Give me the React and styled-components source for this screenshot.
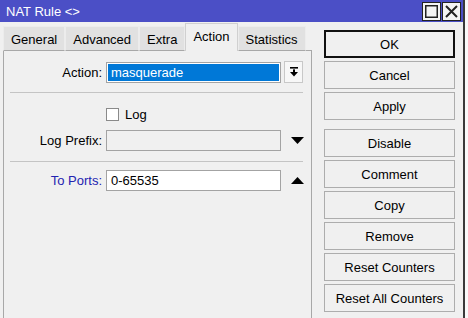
import React from 'react';
import styled, { createGlobalStyle } from 'styled-components';

const GlobalStyle = createGlobalStyle`
  html, body {
    margin: 0;
    padding: 0;
    background: #ffffff;
    font-family: "Liberation Sans", Arial, sans-serif;
    font-size: 13px;
    color: #000;
  }
`;

const Screen = styled.div`
  display: flex;
  width: 468px;
  height: 318px;
`;

const Window = styled.div`
  width: 463px;
  height: 318px;
  background: #f0f0f0;
  border-right: 2px solid #3a3a3a;
  display: flex;
  flex-direction: column;
  overflow: hidden;
`;

const Outside = styled.div`
  flex: 1;
  background: #fafafa;
`;

const TitleBar = styled.div`
  height: 22px;
  flex: none;
  background: #4b4fc6;
  display: flex;
  align-items: center;
  padding: 0 2px 0 6px;
  color: #fff;
`;

const Title = styled.span`
  flex: 1;
  font-size: 13px;
`;

const TitleButton = styled.div`
  width: 17px;
  height: 17px;
  margin-left: 1px;
  background: #f4f4f4;
  border: 1px solid #222;
  display: flex;
  align-items: center;
  justify-content: center;
`;

const Body = styled.div`
  flex: 1;
  display: flex;
  gap: 12px;
`;

const LeftSide = styled.div`
  width: 309px;
  padding-left: 3px;
  padding-top: 1px;
  display: flex;
  flex-direction: column;
`;

const Tabs = styled.div`
  display: flex;
  align-items: flex-end;
  height: 28px;
  position: relative;
  z-index: 1;
  margin-bottom: -1px;
`;

const Tab = styled.div`
  height: ${({ $active }) => ($active ? '28px' : '25px')};
  padding: 0 7px;
  box-sizing: border-box;
  display: flex;
  align-items: ${({ $active }) => ($active ? 'flex-start' : 'center')};
  padding-top: ${({ $active }) => ($active ? '5px' : '1px')};
  background: ${({ $active }) => ($active ? '#f0f0f0' : '#e1e1e1')};
  border: 1px solid ${({ $active }) => ($active ? '#d0d0d0' : '#ececec')};
  border-bottom: ${({ $active }) => ($active ? 'none' : '1px solid #a8a8a8')};
  font-size: 13px;
`;

const Panel = styled.div`
  flex: 1;
  border: 1px solid #a8a8a8;
  border-bottom: none;
  background: #f0f0f0;
  padding-top: 10px;
`;

const Row = styled.div`
  display: grid;
  grid-template-columns: 97px 175px 20px;
  column-gap: 5px;
  align-items: center;
  height: ${({ $h }) => $h || 21}px;
  margin-top: ${({ $mt }) => $mt || 0}px;
  margin-bottom: ${({ $mb }) => $mb || 0}px;
`;

const Label = styled.span`
  text-align: right;
  color: ${({ $blue }) => ($blue ? '#2323b0' : '#000')};
  margin-right: -1px;
`;

const Field = styled.div`
  height: 21px;
  box-sizing: border-box;
  border: 1px solid #a3a3a3;
  background: ${({ $bg }) => $bg};
  color: ${({ $selected }) => ($selected ? '#fff' : '#000')};
  box-shadow: ${({ $selected }) => ($selected ? 'inset 0 0 0 1px #ffffff' : 'none')};
  padding-left: 4px;
  display: flex;
  align-items: center;
`;

const DropButton = styled.div`
  width: 19px;
  height: 22px;
  box-sizing: border-box;
  border: 1px solid #c8c8c8;
  background: #f7f7f7;
  display: flex;
  align-items: center;
  justify-content: center;
  margin-left: -2px;
`;

const Arrow = styled.div`
  display: flex;
  justify-content: center;
  margin-left: 2px;
`;

const Divider = styled.div`
  height: 1px;
  background: #c4c4c4;
  margin-left: 6px;
  width: 293px;
`;

const CheckLine = styled.div`
  display: flex;
  align-items: center;
  gap: 6px;
`;

const Checkbox = styled.div`
  width: 13px;
  height: 13px;
  box-sizing: border-box;
  border: 1px solid #8a8a8a;
  background: #fff;
`;

const Buttons = styled.div`
  display: flex;
  flex-direction: column;
  gap: 3px;
  padding-top: 8px;
  width: 131px;
`;

const Button = styled.div`
  height: 28px;
  box-sizing: border-box;
  border: ${({ $default }) => ($default ? '2px solid #111' : '1px solid #adadad')};
  background: #f0f0f0;
  display: flex;
  align-items: center;
  justify-content: center;
  font-size: 13px;
  margin-top: ${({ $gapTop }) => ($gapTop ? '6px' : '0')};
`;

const DownBar = () => (
  <svg width="10" height="10" viewBox="0 0 10 10">
    <rect x="1" y="0" width="8" height="1.6" fill="#000" />
    <rect x="4" y="2.4" width="2" height="3" fill="#000" />
    <polygon points="1,5 9,5 5,9.5" fill="#000" />
  </svg>
);

const Triangle = ({ up }) => (
  <svg width="13" height="7" viewBox="0 0 13 7">
    <polygon points={up ? '0,7 13,7 6.5,0' : '0,0 13,0 6.5,7'} fill="#000" />
  </svg>
);

export default function App() {
  return (
    <Screen>
      <GlobalStyle />
      <Window>
        <TitleBar>
          <Title>NAT Rule &lt;&gt;</Title>
          <TitleButton>
            <svg width="13" height="13" viewBox="0 0 13 13">
              <rect x="0.75" y="0.75" width="11.5" height="11.5" fill="none" stroke="#222" strokeWidth="1.5" />
            </svg>
          </TitleButton>
          <TitleButton>
            <svg width="13" height="13" viewBox="0 0 13 13">
              <path d="M1 1 L12 12 M12 1 L1 12" stroke="#222" strokeWidth="2" />
            </svg>
          </TitleButton>
        </TitleBar>
        <Body>
          <LeftSide>
            <Tabs>
              <Tab>General</Tab>
              <Tab>Advanced</Tab>
              <Tab>Extra</Tab>
              <Tab $active>Action</Tab>
              <Tab>Statistics</Tab>
            </Tabs>
            <Panel>
              <Row $mb={10}>
                <Label>Action:</Label>
                <Field $bg="#0078d7" $selected>masquerade</Field>
                <DropButton>
                  <DownBar />
                </DropButton>
              </Row>
              <Divider />
              <Row $h={13} $mt={14} $mb={10}>
                <span />
                <CheckLine>
                  <Checkbox />
                  <span>Log</span>
                </CheckLine>
              </Row>
              <Row $mb={10}>
                <Label>Log Prefix:</Label>
                <Field $bg="#f0f0f0" />
                <Arrow>
                  <Triangle />
                </Arrow>
              </Row>
              <Divider />
              <Row $mt={8}>
                <Label $blue>To Ports:</Label>
                <Field $bg="#ffffff">0-65535</Field>
                <Arrow>
                  <Triangle up />
                </Arrow>
              </Row>
            </Panel>
          </LeftSide>
          <Buttons>
            <Button $default>OK</Button>
            <Button>Cancel</Button>
            <Button>Apply</Button>
            <Button $gapTop>Disable</Button>
            <Button>Comment</Button>
            <Button>Copy</Button>
            <Button>Remove</Button>
            <Button>Reset Counters</Button>
            <Button>Reset All Counters</Button>
          </Buttons>
        </Body>
      </Window>
      <Outside />
    </Screen>
  );
}
